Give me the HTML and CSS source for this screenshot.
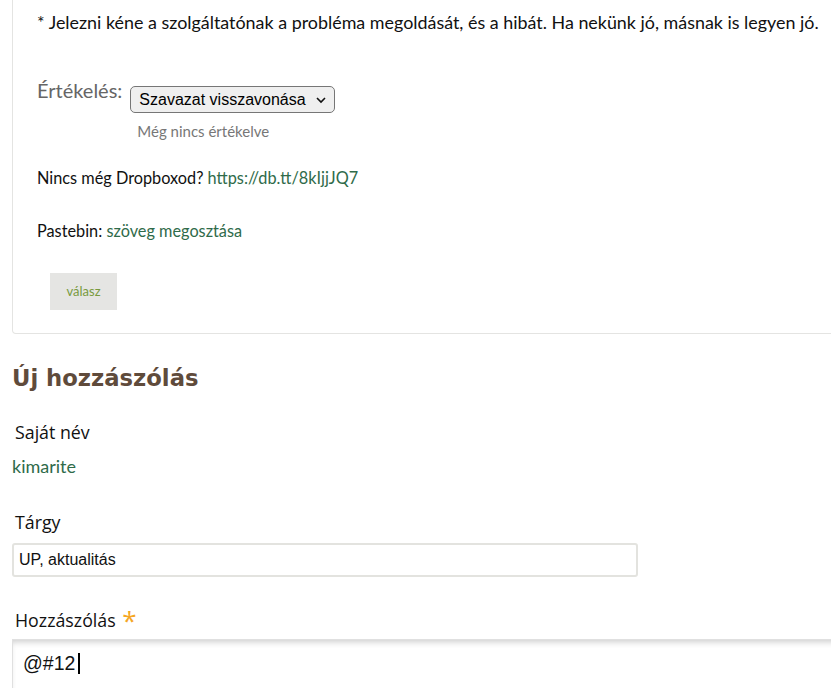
FILE: index.html
```html
<!doctype html>
<html lang="hu">

<head>
    <meta charset="utf-8">
    <meta name="viewport" content="width=device-width, initial-scale=1">
    <title>Új hozzászólás</title>
    <link rel="stylesheet" href="styles.css">
</head>

<body>
    <div class="comment">
        <p class="note">* Jelezni kéne a szolgáltatónak a probléma megoldását, és a hibát. Ha nekünk jó, másnak is legyen jó.</p>

        <div class="rating">
            <span class="rating-label">Értékelés:</span>
            <div class="rating-box">
                <span class="vote-wrap">
                    <select class="vote">
                        <option>Szavazat visszavonása</option>
                    </select>
                    <svg class="vote-arrow" width="12" height="8" viewBox="0 0 12 8"><path d="M2 2 L6 6 L10 2" fill="none" stroke="#111" stroke-width="1.6"/></svg>
                </span>
                <div class="rating-state">Még nincs értékelve</div>
            </div>
        </div>

        <p class="sig">Nincs még Dropboxod? <a href="#">https://db.tt/8kIjjJQ7</a></p>
        <p class="sig sig-paste">Pastebin: <a href="#">szöveg megosztása</a></p>

        <a class="reply" href="#">válasz</a>
    </div>

    <h2 class="new-title">Új hozzászólás</h2>

    <div class="field field-name">
        <label class="field-label">Saját név</label>
        <a class="user" href="#">kimarite</a>
    </div>

    <div class="field field-subject">
        <label class="field-label" for="subject">Tárgy</label>
        <input type="text" id="subject" class="subject" value="UP, aktualitás">
    </div>

    <div class="field field-body">
        <label class="field-label" for="body">Hozzászólás <span class="req">*</span></label>
        <div class="body-box" id="body"><span class="body-text">@#12</span><span class="caret"></span></div>
    </div>
</body>

</html>
```

FILE: styles.css
```css
html, body {
   margin: 0;
   overflow: hidden;
}
body {
   width: 831px;
   height: 688px;
   font-family: Lato, "Liberation Sans", sans-serif;
   color: #111;
   background: #fff;
}
a {
   color: #2f6b4a;
   text-decoration: none;
}

.comment {
   margin-left: 12px;
   margin-right: -20px;
   padding: 10px 0 23px 24px;
   border: 1px solid #e4e4e2;
   border-top: none;
   border-bottom-left-radius: 4px;
}
.note {
   margin: 0;
   font-size: 17.9px;
   line-height: 24px;
}

.rating {
   display: flex;
   align-items: flex-start;
   margin-top: 45px;
}
.rating-label {
   font-size: 20px;
   line-height: 22px;
   color: #666;
   margin-right: 8px;
}
.rating-box {
   padding-top: 7px;
}
.vote-wrap {
   position: relative;
   display: block;
   width: 205px;
   height: 27px;
}
.vote {
   appearance: none;
   display: block;
   width: 205px;
   height: 27px;
   font-family: "Liberation Sans", Arial, sans-serif;
   font-size: 16px;
   color: #000;
   background: #efefef;
   border: 1px solid #767676;
   border-radius: 5px;
   padding: 0 24px 0 8px;
}
.vote-arrow {
   position: absolute;
   right: 8px;
   top: 10px;
}
.rating-state {
   margin: 8px 0 0 7px;
   font-size: 15px;
   line-height: 20px;
   color: #777;
}

.sig {
   margin: 25px 0 0;
   font-size: 16.3px;
   line-height: 24px;
}
.sig-paste {
   margin-top: 29px;
}

.reply {
   display: inline-block;
   margin: 30px 0 0 13px;
   width: 67px;
   height: 37px;
   line-height: 37px;
   text-align: center;
   background: #e5e5e3;
   color: #789a3e;
   font-size: 13px;
}

.new-title {
   margin: 29px 0 0 12px;
   font-family: "DejaVu Sans", sans-serif;
   font-weight: bold;
   font-size: 22.7px;
   line-height: 30px;
   color: #5f4b3b;
}

.field {
   margin-left: 12px;
}
.field-label {
   display: block;
   margin-left: 3px;
   font-family: "Open Sans", Lato, sans-serif;
   font-size: 17.8px;
   line-height: 22px;
   color: #111;
}
.field-name {
   margin-top: 28px;
}
.user {
   display: block;
   margin-top: 12px;
   font-size: 18px;
   line-height: 22px;
}
.field-subject {
   margin-top: 34px;
}
.subject {
   display: block;
   box-sizing: border-box;
   margin-top: 10px;
   width: 626px;
   height: 34px;
   padding: 0 5px;
   border: 2px solid #e3e3df;
   border-radius: 3px;
   font-family: "Liberation Sans", Arial, sans-serif;
   font-size: 16px;
   color: #111;
   outline: none;
}
.field-body {
   margin-top: 32px;
}
.req {
   color: #f5a623;
   font-size: 26px;
   line-height: 10px;
   vertical-align: -3px;
   margin-left: 2px;
}
.body-box {
   margin-top: 8px;
   height: 38px;
   margin-right: -20px;
   padding: 10px 10px 0;
   border: 1px solid #e0e0e0;
   border-bottom: none;
   box-shadow: inset 0 5px 6px -3px rgba(0, 0, 0, 0.2);
   font-family: "Liberation Sans", Arial, sans-serif;
   font-size: 19.5px;
   line-height: 26px;
   color: #111;
}
.caret {
   display: inline-block;
   width: 2px;
   height: 21px;
   margin-left: 3px;
   background: #000;
   vertical-align: -4px;
}
```
